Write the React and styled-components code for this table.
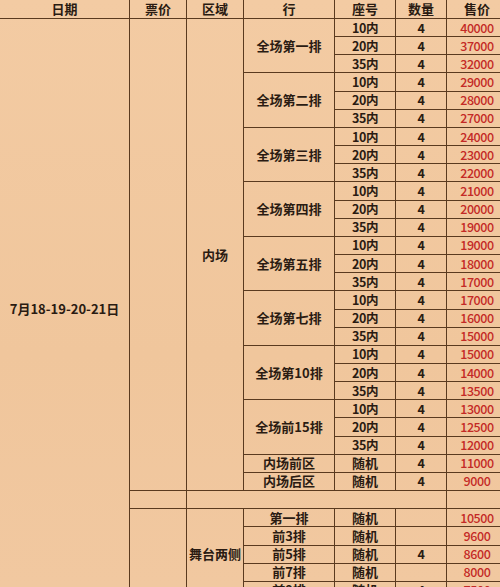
import styled, { createGlobalStyle } from "styled-components";

const GlobalStyle = createGlobalStyle`
  html, body {
    margin: 0;
    padding: 0;
    background: #f1c89f;
    overflow: hidden;
  }
`;

const LINE = "#5a3a1f";

const Sheet = styled.div`
  width: 500px;
  height: 587px;
  overflow: hidden;
  background: linear-gradient(180deg, #f3cba3 0%, #f0c69c 60%, #f1c8a0 100%);
`;

const Table = styled.table`
  width: 508px;
  table-layout: fixed;
  border-collapse: collapse;
  font-family: "Noto Sans CJK SC", "Noto Sans", sans-serif;
  color: #2a1b12;
  margin-top: -1px;
  margin-left: -1px;

  td,
  th {
    border: 1px solid ${LINE};
    padding: 0;
    text-align: center;
    vertical-align: middle;
    white-space: nowrap;
    overflow: hidden;
  }
`;

const HeadRow = styled.tr`
  height: 19px;
`;

const Row = styled.tr`
  height: 18.17px;
`;

const HeadCell = styled.th`
  font-size: 13px;
  font-weight: 700;
  line-height: 14px;
`;

const Cell = styled.td`
  font-size: ${(p) => (p.$num ? "12.5px" : "13px")};
  font-weight: ${(p) => (p.$price ? 500 : 700)};
  letter-spacing: ${(p) => (p.$num ? "-0.4px" : "0")};
  color: ${(p) => (p.$price ? "#c42a26" : "inherit")};
  line-height: 14px;
`;

const groups = [
  { name: "全场第一排", prices: [40000, 37000, 32000] },
  { name: "全场第二排", prices: [29000, 28000, 27000] },
  { name: "全场第三排", prices: [24000, 23000, 22000] },
  { name: "全场第四排", prices: [21000, 20000, 19000] },
  { name: "全场第五排", prices: [19000, 18000, 17000] },
  { name: "全场第七排", prices: [17000, 16000, 15000] },
  { name: "全场第10排", prices: [15000, 14000, 13500] },
  { name: "全场前15排", prices: [13000, 12500, 12000] },
];
const seats = ["10内", "20内", "35内"];

const inner = [
  { name: "内场前区", qty: "4", price: 11000 },
  { name: "内场后区", qty: "4", price: 9000 },
];

const stage = [
  { name: "第一排", qty: "", price: 10500 },
  { name: "前3排", qty: "", price: 9600 },
  { name: "前5排", qty: "4", price: 8600 },
  { name: "前7排", qty: "", price: 8000 },
  { name: "前9排", qty: "4", price: 7500 },
];

const totalRows = groups.length * 3 + inner.length + 1 + stage.length;
const innerRows = groups.length * 3 + inner.length;

export default function App() {
  const rows = [];
  groups.forEach((g, gi) => {
    seats.forEach((seat, si) => {
      const first = gi === 0 && si === 0;
      rows.push(
        <Row key={`${gi}-${si}`}>
          {first && (
            <>
              <Cell rowSpan={totalRows}>7月18-19-20-21日</Cell>
              <Cell rowSpan={innerRows}></Cell>
              <Cell rowSpan={innerRows}>内场</Cell>
            </>
          )}
          {si === 0 && <Cell rowSpan={3}>{g.name}</Cell>}
          <Cell $num>{seat}</Cell>
          <Cell $num>4</Cell>
          <Cell $num $price>{g.prices[si]}</Cell>
        </Row>
      );
    });
  });

  inner.forEach((r) => {
    rows.push(
      <Row key={r.name}>
        <Cell>{r.name}</Cell>
        <Cell>随机</Cell>
        <Cell $num>{r.qty}</Cell>
        <Cell $num $price>{r.price}</Cell>
      </Row>
    );
  });

  rows.push(
    <Row key="blank">
      <Cell></Cell>
      <Cell colSpan={4}></Cell>
      <Cell></Cell>
    </Row>
  );

  stage.forEach((r, i) => {
    rows.push(
      <Row key={r.name}>
        {i === 0 && (
          <>
            <Cell rowSpan={stage.length}></Cell>
            <Cell rowSpan={stage.length}>舞台两侧</Cell>
          </>
        )}
        <Cell>{r.name}</Cell>
        <Cell>随机</Cell>
        <Cell $num>{r.qty}</Cell>
        <Cell $num $price>{r.price}</Cell>
      </Row>
    );
  });

  return (
    <>
      <GlobalStyle />
      <Sheet>
        <Table>
          <colgroup>
            <col style={{ width: 130 }} />
            <col style={{ width: 57 }} />
            <col style={{ width: 57 }} />
            <col style={{ width: 91 }} />
            <col style={{ width: 61 }} />
            <col style={{ width: 51 }} />
            <col style={{ width: 61 }} />
          </colgroup>
          <thead>
            <HeadRow>
              <HeadCell>日期</HeadCell>
              <HeadCell>票价</HeadCell>
              <HeadCell>区域</HeadCell>
              <HeadCell>行</HeadCell>
              <HeadCell>座号</HeadCell>
              <HeadCell>数量</HeadCell>
              <HeadCell>售价</HeadCell>
            </HeadRow>
          </thead>
          <tbody>{rows}</tbody>
        </Table>
      </Sheet>
    </>
  );
}
